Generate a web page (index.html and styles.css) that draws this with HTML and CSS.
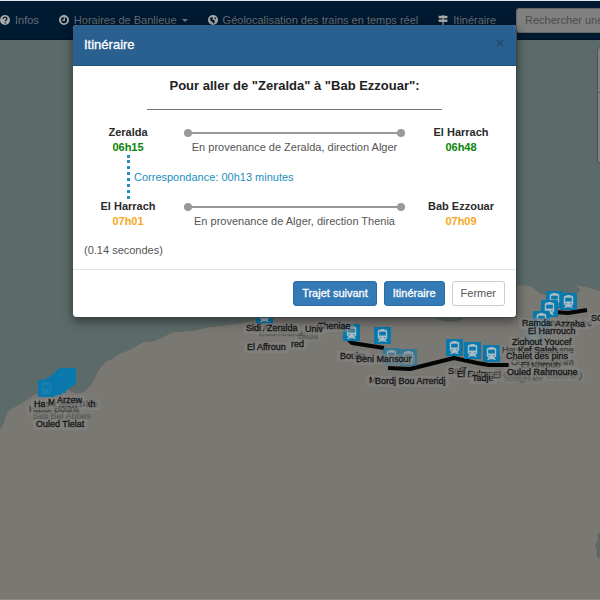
FILE: index.html
```html
<!DOCTYPE html>
<html lang="fr">
<head>
<meta charset="utf-8">
<meta name="viewport" content="width=device-width, initial-scale=1">
<title>Itinéraire</title>
<link rel="stylesheet" href="styles.css">
</head>
<body>
<nav class="navbar">
  <a class="nav-link" href="#"><svg class="icon" viewBox="0 0 16 16"><circle cx="8" cy="8" r="8"/><path class="cut" d="M5 6.2C5 2.300 11 2.300 11 6c0 2-2.400 2-2.600 4M8.400 11.500v2"/></svg>Infos</a>
  <a class="nav-link" href="#"><svg class="icon" viewBox="0 0 16 16"><circle cx="8" cy="8" r="6.500" class="ring"/><path class="hand" d="M8.500 3.500v5H5"/></svg>Horaires de Banlieue<span class="caret"></span></a>
  <a class="nav-link" href="#"><svg class="icon" viewBox="0 0 16 16"><circle cx="8" cy="8" r="8"/><path class="ocean" d="M3 5l3-2 2 1-1 3 3 1 1 3-2 3-2-3-3-2zM11 3l2 2-1 2-2-2z"/></svg>Géolocalisation des trains en temps réel</a>
  <a class="nav-link" href="#"><svg class="icon" viewBox="0 0 16 16"><path d="M7 0h2v1h5l2 2-2 2H9v2h6v4H9v5H7v-5H2L0 9l2-2h5V5H1V1h6z"/></svg>Itinéraire</a>
  <input class="search" type="search" placeholder="Rechercher une gare" aria-label="Rechercher une gare">
</nav>

<main class="map" id="map">
  <svg class="terrain" viewBox="0 0 600 560" preserveAspectRatio="xMinYMin slice" aria-hidden="true">
    <path class="land" d="M-2 392L2 386 7 372 14 367 22 363 27 359 35 354 42 353 54 356 68 349 75 353 83 352 90 346 94 339 98 330 106 321 112 319 118 314 126 311 134 307 143 302 153 301 161 298 172 292 184 291 196 290 208 287 225 285 245 282 262 278 290 260 420 250 510 246 519 245 527 245 533 247 540 253 555 256 574 255 580 250 575 245 588 247 602 251V562H-2z"/>
    <ellipse class="water" cx="450" cy="275" rx="16" ry="6"/>
    <path class="water" d="M601 492l-3 2 1 6-3 6 2 5-1 5 4 3z"/>
    <path class="rail" d="M344 295l8 8 32 5M388 328l22 1 44-11 23 5 12 2h20M553 272l15 1 19-3"/>
  </svg>
  <aside class="map-tools" aria-label="Outils de la carte"></aside>
</main>

<div class="dialog-wrap">
  <section class="dialog" role="dialog" aria-labelledby="dialog-title">
    <header class="dialog-header">
      <h2 class="dialog-title" id="dialog-title">Itinéraire</h2>
      <button class="close" type="button" aria-label="Fermer la fenêtre">×</button>
    </header>
    <div class="dialog-body">
      <h3 class="trip-title">Pour aller de "Zeralda" à "Bab Ezzouar":</h3>
      <hr class="rule">
      <div class="leg">
        <div class="stop"><b>Zeralda</b><b class="on-time">06h15</b></div>
        <div class="route"><span class="track"></span><span>En provenance de Zeralda, direction Alger</span></div>
        <div class="stop"><b>El Harrach</b><b class="on-time">06h48</b></div>
      </div>
      <div class="transfer">Correspondance: 00h13 minutes</div>
      <div class="leg">
        <div class="stop"><b>El Harrach</b><b class="late">07h01</b></div>
        <div class="route"><span class="track"></span><span>En provenance de Alger, direction Thenia</span></div>
        <div class="stop"><b>Bab Ezzouar</b><b class="late">07h09</b></div>
      </div>
      <p class="duration">(0.14 secondes)</p>
    </div>
    <footer class="dialog-footer">
      <button class="btn btn-primary" type="button">Trajet suivant</button>
      <button class="btn btn-primary" type="button">Itinéraire</button>
      <button class="btn" type="button">Fermer</button>
    </footer>
  </section>
</div>
<script src="map.js"></script>
</body>
</html>
```
FILE: map.js
```js
// Stations: x and y of the marker's top-left corner, in map pixels,
// then "packed" in a dense cluster or a fade level.
const markers = [
  [59, 328, "packed"], [56, 330, "packed"], [52, 333, "packed"], [49, 336, "packed"],
  [45, 338, "packed"], [41, 340, "packed"], [38, 340, "packed"],
  [256, 267], [343, 284], [374, 287], [383, 308, "fade-1"], [400, 309, "fade-1"],
  [446, 299], [464, 302], [483, 305],
  [546, 251], [560, 253], [541, 260], [533, 271], [528, 278, "fade-2"], [526, 286, "fade-2"]
];

// Labels: text, x, y, then a fade level when neighbours cover the label.
const labels = [
  ["Sidi Bel Abbes", 30, 371, "fade-2"], ["Hassi Bounif", 26, 364, "fade-1"],
  ["Hassi Mefsoukh", 31, 359, "fade-1"], ["Has", 31, 359], ["kh", 83, 359], ["n", 77, 358],
  ["M", 45, 357], ["Arzew", 54, 355], ["Ouled Tlelat", 33, 379],
  ["Boumedfaa", 256, 288, "fade-2"], ["Blida", 295, 291, "fade-2"], ["red", 288, 299], ["El Affroun", 244, 302],
  ["Theniae", 315, 281], ["Sidi A", 243, 283], ["Univ", 302, 284], ["Zeralda", 264, 283],
  ["Bouira", 337, 311], ["Beni Mansour", 353, 314], ["M", 366, 335], ["Bordj Bou Arreridj", 372, 336],
  ["Setif", 445, 326], ["El Eulma", 454, 329], ["Telaghma", 500, 333, "fade-2"], ["Tadje", 469, 333],
  ["El Gourzi (El Guerrah)", 490, 330, "fade-1"],
  ["Didouche", 551, 278, "fade-1"], ["Ramdan", 519, 278], ["Azzaba", 552, 279], ["SC", 588, 273],
  ["El Harrouch", 525, 286], ["Hamma Bouziane", 499, 305, "fade-1"], ["Zighout Youcef", 509, 297],
  ["Oued Hamimim", 508, 317, "fade-1"], ["El Khroub", 518, 320, "fade-1"], ["Kef Salah", 515, 305],
  ["Chalet des pins", 503, 311], ["Ouled Rahmoune", 504, 327]
];

const train = '<svg viewBox="0 0 18 18"><path d="M7 2h4v1h2l1 1v8l-2 2 2 2h-2l-1-1H7l-1 1H4l2-2-2-2V4l1-1h2z"/><path class="glass" d="M5.500 5h7v4h-7zM5.500 11h2v1h-2zM10.500 11h2v1h-2z"/></svg>';
const map = document.getElementById("map");

function place(kind, x, y, content, state) {
  const el = document.createElement("span");
  el.className = state ? kind + " " + state : kind;
  el.style.left = x + "px";
  el.style.top = y + "px";
  el.innerHTML = content;
  map.append(el);
}

markers.forEach(([x, y, state]) => place("marker", x, y, train, state));
labels.forEach(([text, x, y, state]) => place("label", x, y, text, state));
```
FILE: styles.css
```css
* { box-sizing: border-box; }
body {
  margin: 0;
  min-height: 100vh;
  display: flex;
  flex-direction: column;
  overflow: hidden;
  border-top: 1px solid #dde6ea;
  border-bottom: 1px solid #8b8985;
  background: #5c6b69;
  font: 11px/15px "Liberation Sans", Arial, sans-serif;
  color: #555;
}
.navbar {
  display: flex;
  align-items: center;
  height: 39px;
  background: #001a32;
  border-bottom: 1px solid #00122a;
  overflow: hidden;
}
.nav-link {
  display: flex;
  align-items: center;
  flex: none;
  margin-right: 20px;
  color: #666d74;
  text-decoration: none;
}
.icon { width: 10px; height: 10px; margin-right: 5px; fill: #aaa; }
.cut, .ring, .hand { fill: none; stroke-width: 2; }
.cut { stroke: #001a32; }
.ring { stroke: #aaa; stroke-width: 3; }
.hand { stroke: #aaa; }
.ocean { fill: #001a32; }
.caret {
  margin-left: 5px;
  border: 3px solid transparent;
  border-top-color: #727980;
  border-bottom: 0;
}
.search {
  flex: none;
  width: 150px;
  height: 25px;
  padding: 0 8px;
  border: 1px solid #666;
  border-radius: 3px;
  background: #808080;
  font: inherit;
}
.search::placeholder { color: #4b4b4b; opacity: 1; }

.map { position: relative; flex: 1; overflow: hidden; }
.terrain { position: absolute; inset: 0; width: 100%; height: 100%; }
.land { fill: #7a7873; stroke: #626865; }
.water { fill: #5c6b69; stroke: #566361; }
.rail { fill: none; stroke: #050505; stroke-width: 4; stroke-linejoin: round; }
.map-tools {
  position: absolute;
  top: 7px;
  left: calc(100% - 3px);
  width: 24px;
  height: 116px;
  border: 1px solid #4d5553;
  border-radius: 3px;
  background: linear-gradient(#5a5f5e, #5a5f5e) 0 44px / 100% 1px no-repeat #808080;
}
.marker {
  position: absolute;
  width: 17px;
  height: 17px;
  border-radius: 1px;
  background: #0878ad;
}
.marker svg { display: block; fill: #a9bcc4; }
.marker .glass { fill: #0878ad; }
.packed svg { opacity: .12; }
.label {
  position: absolute;
  padding: 0 3px;
  border-radius: 2px;
  background: rgba(132, 131, 130, .6);
  color: #161616;
  font-size: 9px;
  line-height: 11px;
  white-space: nowrap;
  -webkit-text-stroke: 0.3px #161616;
}
.fade-1 { opacity: .6; }
.fade-2 { opacity: .3; }

.dialog-wrap {
  position: absolute;
  inset: 25px 83px auto 73px;
}
.dialog {
  overflow: hidden;
  border: 1px solid #3c4543;
  border-width: 0 1px 1px 0;
  border-radius: 4px;
  background: #fff;
  box-shadow: 0 3px 11px rgba(0, 0, 0, .5);
}
.dialog-header {
  display: flex;
  justify-content: space-between;
  height: 41px;
  padding: 11px;
  background: #2a6090;
  border-bottom: 1px solid #214f7b;
}
.dialog-title { margin: 0; font-size: 13px; line-height: 18px; font-weight: normal; color: #fff; -webkit-text-stroke: 0.3px #fff; }
.close {
  width: 10px;
  height: 14px;
  padding: 0;
  border: 0;
  background: none;
  color: #204a70;
  font: bold 15px/14px "Liberation Sans", Arial, sans-serif;
}
.dialog-body { padding: 11px; }
.trip-title {
  margin: 0;
  color: #222;
  font-size: 13px;
  line-height: 17px;
  text-align: center;
}
.rule { width: 70%; height: 1px; margin: 15px auto; border: 0; background: #777; }
.leg { display: grid; grid-template-columns: 88px 1fr 88px; text-align: center; }
.stop, .route { display: flex; flex-direction: column; align-items: center; }
.stop { color: #2a2a2a; }
.on-time { color: #078507; }
.late { color: #f5a81c; }
.track {
  display: flex;
  align-items: center;
  justify-content: space-between;
  width: 90%;
  height: 15px;
  background: linear-gradient(#999, #999) center / 100% 2px no-repeat;
}
.track::before, .track::after {
  content: "";
  width: 8px;
  height: 8px;
  border-radius: 50%;
  background: #999;
}
.transfer {
  height: 44px;
  margin-left: 43px;
  padding-left: 4px;
  border-left: 3px dotted #238ec1;
  color: #1d8fbd;
  line-height: 44px;
}
.duration { margin: 14px 0 0; }
.dialog-footer {
  display: flex;
  justify-content: flex-end;
  gap: 7px;
  padding: 11px;
  border-top: 1px solid #e2e5e7;
}
.btn {
  height: 25px;
  padding: 0 8px;
  border: 1px solid #ccc;
  border-radius: 3px;
  background: #fff;
  color: #555;
  font: inherit;
}
.btn-primary { background: #337ab7; border-color: #2c6ca5; color: #fff; -webkit-text-stroke: 0.3px #fff; }
```
